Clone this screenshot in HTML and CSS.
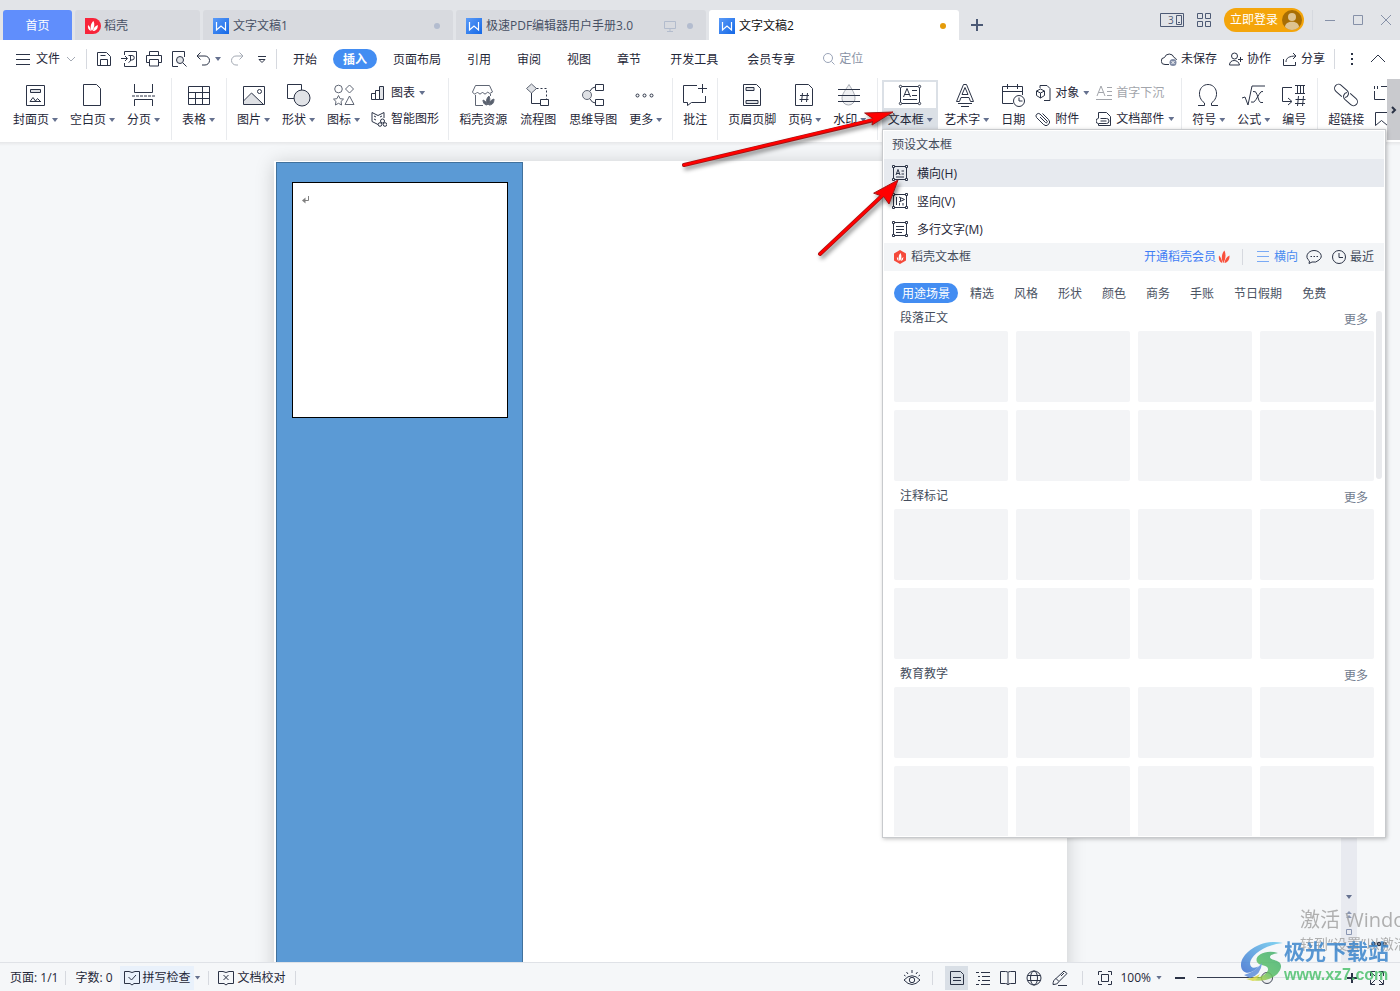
FILE: index.html
```html
<!DOCTYPE html>
<html lang="zh-CN">
<head>
<meta charset="utf-8">
<title>文字文稿2</title>
<link rel="stylesheet" href="styles.css">
</head>
<body>
<svg class="defs" aria-hidden="true">
  <defs>
    <linearGradient id="wg" x1="0" y1="0" x2="1" y2="1"><stop offset="0" stop-color="#5b9bf8"/><stop offset="1" stop-color="#1468e6"/></linearGradient>
    <symbol id="wlogo" viewBox="0 0 16 16"><rect width="16" height="16" fill="url(#wg)"/><path d="M3.500 4v8l4.500-4 4.500 4V4" fill="none" stroke="#fff" stroke-width="1.200"/></symbol>
    <symbol id="flame" viewBox="0 0 12 14"><path d="M5.500 13C2.500 9 4 3 6.500 0.500c1.500 3.500 1.500 8-1 12.500zM4.300 13C1.500 12 .3 9 1 5.500 3 7.500 4 10 4.300 13zM6.500 13c.5-3.500 2-6 5-7.500.3 4-1.500 7-5 7.500z" fill="currentColor"/></symbol>
    <symbol id="frame" viewBox="0 0 24 24"><path d="M4 3.500h16M4 20.500h16M2.500 5v14M21.500 5v14"/><circle cx="2.500" cy="3.500" r="1.200"/><circle cx="21.500" cy="3.500" r="1.200"/><circle cx="2.500" cy="20.500" r="1.200"/><circle cx="21.500" cy="20.500" r="1.200"/></symbol>
    <symbol id="frame16" viewBox="0 0 16 16"><path d="M2 1.500h12M2 14.500h12M1.500 2v12M14.500 2v12"/><path d="M.5.5h2v2h-2zM13.500.5h2v2h-2zM.5 13.500h2v2h-2zM13.500 13.500h2v2h-2z" fill="#fff"/></symbol>
  </defs>
</svg>
<div class="app">
  <header class="titlebar">
    <nav class="tabs">
      <button class="tab home">首页</button>
      <button class="tab daoke"><svg class="i16" viewBox="0 0 16 16"><path d="M0 0h8a8 8 0 010 16H0z" fill="#f8243a"/><path d="M7 13C4.500 9.500 6 5 8.500 3c1.500 3 1 7-1.500 10zM5.800 13C3.500 12 2.500 10 3 7c2 1.500 3 3.500 2.800 6zM8 13c.3-3 2-5 4.800-6 .2 3.500-1.500 6-4.800 6z" fill="#fff"/></svg><span>稻壳</span></button>
      <button class="tab doc"><svg class="i16"><use href="#wlogo"/></svg><span>文字文稿1</span><i class="dot"></i></button>
      <button class="tab doc"><svg class="i16"><use href="#wlogo"/></svg><span>极速PDF编辑器用户手册3.0</span><svg class="i12 pushed" viewBox="0 0 12 12"><path d="M.5 1.500h11v7H.5zM6 8.500v2.500M3 11.500h6" fill="none" stroke="#b3bccd"/></svg><i class="dot near"></i></button>
      <button class="tab doc active"><svg class="i16"><use href="#wlogo"/></svg><span>文字文稿2</span><i class="dot"></i></button>
    </nav>
    <button class="plus" aria-label="新建"><svg class="i12" viewBox="0 0 12 12"><path d="M6 0v12M0 6h12" stroke="#4b5975" stroke-width="2"/></svg></button>
    <div class="wincontrols">
      <button aria-label="窗口"><svg width="24" height="14" viewBox="0 0 24 14" fill="none" stroke="#4d5a75"><path d="M.5.5h23v13H.5z"/><path d="M16.500 2.500h5v9h-5zM18 9.500h2"/><text x="8" y="11" class="svgnum">3</text></svg></button>
      <button aria-label="应用"><svg width="14" height="14" viewBox="0 0 14 14" fill="none" stroke="#4d5a75"><path d="M.5.5h5v5h-5zM8.500.5h5v5h-5zM.5 8.500h5v5h-5zM8.500 8.500h5v5h-5z"/></svg></button>
      <button class="login"><span>立即登录</span><svg width="20" height="20" viewBox="0 0 20 20"><circle cx="10" cy="10" r="10" fill="#a86e04"/><circle cx="10" cy="7" r="4" fill="#dec391"/><path d="M3 17c0-7 14-7 14 0-4 4-10 4-14 0z" fill="#dec391"/></svg></button>
      <i class="vsep"></i>
      <button aria-label="最小化"><svg class="i10" viewBox="0 0 10 10"><path d="M0 5.500h10" stroke="#8691a8"/></svg></button>
      <button aria-label="最大化"><svg class="i10" viewBox="0 0 10 10"><path d="M.5.5h9v9h-9z" fill="none" stroke="#8691a8"/></svg></button>
      <button aria-label="关闭"><svg class="i10" viewBox="0 0 10 10"><path d="M0 0l10 10M10 0L0 10" stroke="#8691a8"/></svg></button>
    </div>
  </header>

  <div class="menubar">
    <button class="file"><svg class="i14" viewBox="0 0 14 14"><path d="M0 2.500h14M0 7.500h14M0 12.500h14"/></svg>文件<svg class="i10 faint" viewBox="0 0 10 10"><path d="M1 3l4 4 4-4"/></svg></button>
    <i class="vsep"></i>
    <div class="quick">
      <button aria-label="保存"><svg class="i16" viewBox="0 0 16 16"><path d="M1.500 1.500h9l4 4v9h-13zM4.500 14.500v-6h7v6M4.500 4.500h5"/></svg></button>
      <button aria-label="输出PDF"><svg class="i16" viewBox="0 0 16 16"><path d="M3.500 4V.5h12v15h-12V12M0 7.500h6M4 5l2.500 2.500L4 10M7.500 4.500h3.500a2 2 0 010 4.500H9.500M9.500 4.500V10l-2 1.500"/></svg></button>
      <button aria-label="打印"><svg class="i16" viewBox="0 0 16 16"><path d="M3.500 4.500v-4h9v4M3.500 11.500H.500v-7h15v7h-3M3.500 8.500h9v6.500h-9z"/></svg></button>
      <button aria-label="打印预览"><svg class="i16" viewBox="0 0 16 16"><path d="M7 15.500H1.500V.5h12V6M12 12l3.500 3.500"/><circle cx="9" cy="9" r="3.500" fill="#e3e5e8"/></svg></button>
      <button aria-label="撤销"><svg class="i14" viewBox="0 0 14 14"><path d="M4.500.5L1 4l3.500 3.500M1 4h8a4.500 4.500 0 010 9H6"/></svg></button>
      <i class="caret"></i>
      <button aria-label="恢复"><svg class="i14 faint" viewBox="0 0 14 14"><path d="M9.500.5L13 4 9.500 7.500M13 4H6a4.500 4.500 0 000 9h2"/></svg></button>
      <button aria-label="更多"><svg class="i10" viewBox="0 0 10 10"><path d="M1 2.500h8M2 5.500h6L5 8.500z"/></svg></button>
    </div>
    <i class="vsep"></i>
    <nav class="menus">
      <button>开始</button><button class="on">插入</button><button>页面布局</button><button class="sp">引用</button><button class="sp">审阅</button><button class="sp">视图</button><button class="sp">章节</button><button class="sp2">开发工具</button><button class="sp2">会员专享</button>
    </nav>
    <label class="search"><svg class="i12" viewBox="0 0 12 12"><circle cx="5" cy="5" r="4.500"/><path d="M8.500 8.500l3 3"/></svg><input type="text" placeholder="定位" aria-label="定位"></label>
    <div class="share">
      <button><svg class="i16" viewBox="0 0 16 16"><path d="M8 13.500H4a3.500 3.500 0 01-.5-7 5 5 0 019.500 0q2 .5 2.500 2.500"/><circle cx="12" cy="11.500" r="3.500" fill="#7f8ba5" stroke="none"/><path d="M10.500 10l3 3M13.500 10l-3 3" stroke="#fff"/></svg>未保存</button>
      <button><svg class="i14" viewBox="0 0 14 14"><circle cx="5.500" cy="4" r="3"/><path d="M.5 13c0-6 9-6 10 0zM9 7.500h5M11.500 5v5"/></svg>协作</button>
      <button><svg class="i14" viewBox="0 0 14 14"><path d="M.5 7v6.500h12V10M3 10c0-4 3-6 10-6M10 1l3 3-3 3"/></svg>分享</button>
      <i class="vsep"></i>
      <button aria-label="更多"><svg width="4" height="14" viewBox="0 0 4 14"><path d="M1 2h2M1 7h2M1 12h2" stroke-width="2"/></svg></button>
      <button class="fold" aria-label="收起"><svg class="i14" viewBox="0 0 14 14"><path d="M0 10l7-7 7 7"/></svg></button>
    </div>
  </div>

  <div class="ribbon">
    <div class="tools">
      <button class="tool"><svg viewBox="0 0 24 24"><path d="M2.500 2.500h18v20h-18z"/><path d="M6.500 6.500h10v3h-10z" fill="#dfe1e5"/><path d="M6 18.500l3-4 2.500 3.500 2-2.500 3 3M6 18.500h11"/></svg><span>封面页<i class="caret"></i></span></button>
      <button class="tool"><svg viewBox="0 0 24 24"><path d="M2.500 1.500h13l4 4v17h-17z"/></svg><span>空白页<i class="caret"></i></span></button>
      <button class="tool"><svg viewBox="0 0 24 24"><path d="M2.500 1v8.500h18V1M2.500 23v-6.500h18V23"/><path d="M0 13h23" stroke-dasharray="3 1"/></svg><span>分页<i class="caret"></i></span></button>
      <i class="rsep"></i>
      <button class="tool"><svg viewBox="0 0 24 24"><path d="M1.500 3.500h21v18h-21zM1.500 9.500h21M1.500 15.500h21M8.500 9.500v12M15.500 3.500v18"/></svg><span>表格<i class="caret"></i></span></button>
      <i class="rsep"></i>
      <button class="tool"><svg viewBox="0 0 24 24"><path d="M1.500 19l9-9 11 11.500h-20z" fill="#dfe1e5" stroke="none"/><path d="M1.500 3.500h21v18h-21zM1.500 18l8-8 12 11.500"/><circle cx="17.500" cy="8.500" r="2"/></svg><span>图片<i class="caret"></i></span></button>
      <button class="tool"><svg viewBox="0 0 24 24"><path d="M.5 1.500h14v14H.5z"/><circle cx="15" cy="15" r="8" fill="#e1e3e7"/></svg><span>形状<i class="caret"></i></span></button>
      <button class="tool"><svg viewBox="0 0 24 24" class="soft"><circle cx="6.500" cy="6" r="3.800"/><path d="M17.500 2l4 4-4 4-4-4zM17.500 13l4.500 8.500H13zM6.500 12.500l1.600 3.200 3.400.4-2.500 2.400.6 3.500-3.100-1.700-3.100 1.700.6-3.500-2.500-2.400 3.400-.4z"/></svg><span>图标<i class="caret"></i></span></button>
      <div class="stack charts">
        <button><svg viewBox="0 0 16 16"><path d="M.5 8.500h4v6h-4zM4.500 5.500h4v9h-4z"/><path d="M8.500 1.500h4v13h-4z" fill="#e1e3e7"/></svg>图表<i class="caret"></i></button>
        <button><svg viewBox="0 0 16 16"><path d="M7 13.500l-6-3V1.500l6 3 6-3V7M3 5l2 1M3 8l2 1M9 6l2-1"/><circle cx="11.500" cy="10" r="2"/><circle cx="9" cy="13.500" r="1.800"/><circle cx="14" cy="13.500" r="1.800"/></svg>智能图形</button>
      </div>
      <i class="rsep"></i>
      <button class="tool"><svg viewBox="0 0 24 24" class="soft"><path d="M12 22.500H4.500V12M1.500 9l3-6.500h14l3 6.500M1.500 9q2 4 5 0 2.500 4 5 0 2.500 4 5 0 2 3 5 0M19.500 11v2"/><path d="M17 22c-2.500-3-1.500-7 1-9 1.500 3 1 6-1 9zM16 22c-3 0-4-3-4-5 2 1 4 2 4 5zM18 22c0-3 2-5 5-6 0 3-1 6-5 6z" fill="#59616e"/></svg><span>稻壳资源</span></button>
      <button class="tool flow"><svg viewBox="0 0 24 24"><path d="M5.500 1l5 4.500-5 4.500-5-4.500z" fill="#dfe1e5" class="soft"/><path d="M5.500 10v10.500h9M14.500 16.500h8v6h-8z"/><path d="M10.500 5.500h10v11" stroke-dasharray="2 2"/></svg><span>流程图</span></button>
      <button class="tool"><svg viewBox="0 0 24 24"><circle cx="6" cy="12" r="4.500" fill="#dfe1e5" class="soft"/><path d="M14.500 1.500h8v6h-8zM14.500 16.500h8v6h-8zM9 8q2-4 5.500-4M9 16q2 4 5.500 4"/></svg><span>思维导图</span></button>
      <button class="tool"><svg viewBox="0 0 24 24"><circle cx="3.500" cy="12.500" r="1.500"/><circle cx="10.500" cy="12.500" r="1.500"/><circle cx="17.500" cy="12.500" r="1.500"/></svg><span>更多<i class="caret"></i></span></button>
      <i class="rsep tight"></i>
      <button class="tool"><svg viewBox="0 0 24 24"><path d="M14 2.500H.5v17h4v3l4-3h14V13M15 5.500h9M19.500 1v9"/></svg><span>批注</span></button>
      <i class="rsep tight"></i>
      <button class="tool"><svg viewBox="0 0 24 24"><path d="M3.500 1.500h13l4 4v17h-17z"/><path d="M6 4.500h8v3H6zM6 17.500h12v3H6z" fill="#dfe1e5"/></svg><span>页眉页脚</span></button>
      <button class="tool"><svg viewBox="0 0 24 24"><path d="M2.500 1.500h13l4 4v17h-17zM9.500 10l-1 9M14.500 10l-1 9M7 12.500h9M6.500 16.500h9"/></svg><span>页码<i class="caret"></i></span></button>
      <button class="tool"><svg viewBox="0 0 24 24"><path d="M11 1.500c3 5 6 9 6 14a6.500 6.500 0 01-13 0c0-5 4-9 7-14z" fill="#eff0f2" stroke="#a9adb5"/><path d="M0 6.500h22M0 12.500h22M0 18.500h22"/></svg><span>水印<i class="caret"></i></span></button>
      <i class="rsep"></i>
      <button class="tool textbox"><svg viewBox="0 0 24 24"><use href="#frame"/><path d="M5.500 14l3.500-8.500 3.500 8.500M7 11.500h4M14 7.500h5M14 12.500h5M5 16.500h14"/></svg><span>文本框<i class="caret"></i></span></button>
      <button class="tool"><svg viewBox="0 0 24 24"><path d="M1.500 18.500l7-17h3l7 17h-3l-1.500-4h-8l-1.500 4zM7 11.500l3-7 3 7zM3 20.500h14M6 23.500h8"/></svg><span>艺术字<i class="caret"></i></span></button>
      <button class="tool date"><svg viewBox="0 0 24 24"><path d="M12 20.500H1.500v-17h20V12M1.500 8.500h20M6.500 1v5M16.500 1v5"/><circle cx="18" cy="18" r="5.500" fill="#fff"/><path d="M18 14.500V18h3.500"/></svg><span>日期</span></button>
      <div class="stack">
        <button><svg viewBox="0 0 16 16"><path d="M5 3V.5h7l3 3v12H9"/><path d="M5.500 4l4 2v4.500l-4 2.500-4-2.500V6zM1.500 6l4 2 4-2M5.500 8v5"/></svg>对象<i class="caret"></i></button>
        <button><svg viewBox="0 0 16 16"><path d="M5 6l5.500 5.500a1 1 0 001.500-1.500L5 3a2.500 2.500 0 00-3.500 3.500l7 7a3.500 3.500 0 005-5L7.500 2.500"/></svg>附件</button>
      </div>
      <div class="stack parts">
        <button class="off"><svg viewBox="0 0 16 16"><path d="M1 11l4-10 4 10M2.500 7.500h5M11 2.500h5M11 6.500h5M11 10.500h5M0 14.500h16"/></svg>首字下沉</button>
        <button><svg viewBox="0 0 16 16"><path d="M2.500 7V1.500h8l4 4v9h-12V13M4.500 7.500h6a2.500 2.500 0 010 5h-8a2.500 2.500 0 010-5M4.500 10h6"/></svg>文档部件<i class="caret"></i></button>
      </div>
      <i class="rsep"></i>
      <button class="tool"><svg viewBox="0 0 24 24"><path d="M1 22.500h6.500v-2.500C-1 14 2 1.500 11 1.500S23 14 14.500 20v2.500H21"/></svg><span>符号<i class="caret"></i></span></button>
      <button class="tool"><svg viewBox="0 0 24 24"><path d="M0 15l3-1 3 8 4-19h13M11 8.500q3-1 4 3l2 6q1 3 4 2M21 8.500q-2-1-4 3l-3 5q-2 4-5 2.500"/></svg><span>公式<i class="caret"></i></span></button>
      <button class="tool"><svg viewBox="0 0 24 24"><path d="M10 4.500H.5v14h9M6 15l4 3.500L6 22M13 2.500h10M13 10.500h10M15.500 3v7M18.500 3v7M21.500 3v7M16.500 13l-1 10M21.500 13l-1 10M13.500 16.500h10M13 20.500h10"/></svg><span>编号</span></button>
      <i class="rsep"></i>
      <button class="tool"><svg viewBox="0 0 24 24"><g transform="rotate(42 12 12)"><path d="M10 16H2a4 4 0 010-8h8a4 4 0 013 6.500M14 8h8a4 4 0 010 8h-8a4 4 0 01-3-6.500"/></g></svg><span>超链接</span></button>
      <div class="stack last">
        <button aria-label="引用"><svg viewBox="0 0 16 16"><path d="M1.500 6v8.500H12M1.500 1v3M4.500 1v3M8 1.500h6"/></svg></button>
        <button aria-label="书签"><svg viewBox="0 0 16 16"><path d="M2.500 1.500h12v13l-6-5-6 5z"/></svg></button>
      </div>
    </div>
    <button class="scroller" aria-label="更多工具"><svg width="6" height="8" viewBox="0 0 6 8"><path d="M1 1l3 3-3 3" stroke-width="2"/></svg></button>
  </div>

  <main class="workspace">
    <div class="canvas">
      <article class="page"><div class="shape"><div class="frame"><svg width="8" height="8" viewBox="0 0 8 8"><path d="M6.500 0v4.500H2" fill="none" stroke="#808080"/><path d="M3.500 1.500v6L0 4.500z" fill="#808080"/></svg></div></div></article>
    </div>
    <div class="vscroll"><i class="caret"></i><svg width="8" height="8" viewBox="0 0 8 8"><path d="M1 4l3-3 3 3zM1 8l3-3 3 3z" fill="#8a96b2"/></svg><svg width="6" height="6" viewBox="0 0 6 6"><path d="M.5.5h5v5h-5z" fill="none" stroke="#8a96b2"/></svg><svg width="8" height="8" viewBox="0 0 8 8"><path d="M1 0l3 3 3-3zM1 4l3 3 3-3z" fill="#8a96b2"/></svg></div>
    <aside class="side"><svg width="16" height="6" viewBox="0 0 16 6" fill="none" stroke="#2c3446" stroke-width="1.500"><circle cx="2.500" cy="3" r="1.500"/><circle cx="8" cy="3" r="1.500"/><circle cx="13.500" cy="3" r="1.500"/></svg></aside>
  </main>

  <footer class="status">
    <button>页面: 1/1</button><i class="vsep"></i><button>字数: 0</button>
    <button class="spell"><svg class="i16" viewBox="0 0 16 16"><path d="M5 1.500H.500v12H6l2 1.500 2-1.500h5.500v-12H11l-3 1-3-1M4.500 7l3 3 4.500-5"/></svg>拼写检查</button><i class="caret"></i><i class="vsep"></i>
    <button class="proof"><svg class="i16" viewBox="0 0 16 16"><path d="M5 1.500H.500v12H6l2 1.500 2-1.500h5.500v-12H11l-3 1-3-1M5.500 5l5 5M10.500 5l-5 5"/></svg>文档校对</button><i class="vsep"></i>
    <div class="views">
      <button aria-label="护眼模式"><svg class="i16" viewBox="0 0 16 16"><path d="M0 10q8-8.500 16 0-8 9-16 0zM8 0v3M2.500 2l1.500 2M13.500 2L12 4M0 5l1.500 1M16 5l-1.500 1"/><circle cx="8" cy="10" r="2.700"/></svg></button>
      <i class="vsep"></i>
      <button class="cur" aria-label="页面视图"><svg class="i14" viewBox="0 0 14 14"><path d="M.5.500h10l3 3v10H.500zM3 6.500h8M3 9.500h8"/></svg></button>
      <button aria-label="大纲"><svg class="i14" viewBox="0 0 14 14"><path d="M0 1.500h3M5 1.500h9M2 5.500h2M6 5.500h8M2 9.500h2M6 9.500h8M0 13.500h3M5 13.500h9"/></svg></button>
      <button aria-label="阅读版式"><svg class="i16" viewBox="0 0 16 16"><path d="M.5 1.500h5q2 0 2.500 1 .5-1 2.500-1h5v12h-5q-2 0-2.500 1.500-.5-1.500-2.500-1.500h-5zM8 2.500V14"/></svg></button>
      <button aria-label="Web版式"><svg class="i16" viewBox="0 0 16 16"><circle cx="8" cy="8" r="7"/><ellipse cx="8" cy="8" rx="3.500" ry="7"/><path d="M1.500 5.500h13M1.500 10.500h13"/></svg></button>
      <button aria-label="写作模式"><svg class="i16" viewBox="0 0 16 16"><path d="M1 14.500c0-3 1-5 3-6l8-7.500 3 2.500-8 8c-1 2-3 3-6 3zM4 8.500l3 3M6 15.500h9M9 6l3-3"/></svg></button>
      <i class="vsep wide"></i>
      <button class="fit" aria-label="适合页面"><svg class="i14" viewBox="0 0 14 14"><path d="M.5 4V.500H4M10 .500h3.500V4M13.500 10v3.500H10M4 13.500H.500V10M3.500 3.500h7v7h-7z"/></svg></button>
      <button class="zoom">100%<i class="caret"></i></button>
      <button class="minus" aria-label="缩小"><svg class="i10" viewBox="0 0 10 10"><path d="M0 5h10" stroke-width="2"/></svg></button>
      <input type="range" min="0" max="100" value="50" aria-label="缩放">
      <button aria-label="放大"><svg class="i10" viewBox="0 0 10 10"><path d="M0 5h10M5 0v10" stroke-width="2"/></svg></button>
      <button class="full" aria-label="全屏"><svg class="i14" viewBox="0 0 14 14"><path d="M.5 5V.500H5M9 .500h4.500V5M13.500 9v4.500H9M5 13.500H.500V9M1 1l4 4M13 1L9 5M13 13L9 9M1 13l4-4"/></svg></button>
    </div>
  </footer>

  <section class="dropdown">
    <h2>预设文本框</h2>
    <button class="opt hover"><svg class="i16" viewBox="0 0 16 16"><use href="#frame16"/><path d="M4 10l2-5.500L8 10M4.500 8.500h3M9.500 6h2.500M9.500 9h2.500M4 12h8"/></svg><span>横向(H)</span></button>
    <button class="opt"><svg class="i16" viewBox="0 0 16 16"><use href="#frame16"/><path d="M4.500 4v8M7 4l5.500 2.500L7 9M8.500 5v3M7.500 10v2.500M11 10v2.500"/></svg><span>竖向(V)</span></button>
    <button class="opt"><svg class="i16" viewBox="0 0 16 16"><use href="#frame16"/><path d="M4 5.500h8M4 8.500h8M4 11.500h6"/></svg><span>多行文字(M)</span></button>
    <div class="bar">
      <svg width="14" height="14" viewBox="0 0 14 14"><path d="M7 0l6 3.500v7L7 14l-6-3.500v-7z" fill="#f5493a"/><path d="M7 11C4.500 8 6 4.500 7.500 3 9 6 8.500 9 7 11zM5.500 11Q3.500 9.500 4 7q2 1.500 1.500 4zM8 11q0-3 2.500-4 0 3-2.500 4z" fill="#fff"/></svg>
      <span class="name">稻壳文本框</span>
      <a href="#vip">开通稻壳会员<svg class="red" width="12" height="14"><use href="#flame"/></svg></a>
      <i class="vsep"></i>
      <button class="blue"><svg class="i12" viewBox="0 0 12 12"><path d="M0 .5h12M0 5.500h12M0 10.500h12"/></svg>横向</button>
      <button aria-label="反馈"><svg class="i16" viewBox="0 0 16 16"><path d="M3 14.500l.5-2.500C-2 8 2 1.500 8 1.500s10 6 5 9.500q-3 3-7 2zM4.500 7.500h1.500M7.500 7.500h1.500M10.500 7.500H12"/></svg></button>
      <button><svg class="i14" viewBox="0 0 14 14"><circle cx="7" cy="7" r="6.500"/><path d="M7 3v4.500h4"/></svg>最近</button>
    </div>
    <nav class="cats"><button class="on">用途场景</button><button>精选</button><button>风格</button><button>形状</button><button>颜色</button><button>商务</button><button>手账</button><button>节日假期</button><button>免费</button></nav>
    <div class="gallery">
      <div class="list">
        <div class="head"><h3>段落正文</h3><a href="#more1">更多</a></div>
        <div class="cards"><i></i><i></i><i></i><i></i><i></i><i></i><i></i><i></i></div>
        <div class="head"><h3>注释标记</h3><a href="#more2">更多</a></div>
        <div class="cards"><i></i><i></i><i></i><i></i><i></i><i></i><i></i><i></i></div>
        <div class="head"><h3>教育教学</h3><a href="#more3">更多</a></div>
        <div class="cards"><i></i><i></i><i></i><i></i><i></i><i></i><i></i><i></i></div>
      </div>
      <div class="thumb"></div>
    </div>
  </section>

  <svg class="arrows" width="240" height="170" viewBox="0 0 240 170" aria-hidden="true">
    <g stroke-linecap="round"><path d="M14 55L204 10M150 144L214 84" stroke="#a01515" stroke-width="4"/><path d="M195 3l28-1-21 13 1-6zM204 83l24-13-9 24-5-7z" fill="#f00" stroke="#a01515"/><path d="M14 55L206 9M150 144L216 82" stroke="#f00" stroke-width="2.500"/></g>
  </svg>

  <div class="activate"><p class="big">激活 Windows</p><p>转到“设置”以激活 Windows。</p></div>
  <div class="brand">
    <svg width="46" height="44" viewBox="0 0 46 44"><defs><linearGradient id="b1" x1="0" y1="1" x2="1" y2="0"><stop offset="0" stop-color="#3d6fd0"/><stop offset="1" stop-color="#6fd0f0"/></linearGradient><linearGradient id="b2" x1="0" y1="1" x2="1" y2="0"><stop offset="0" stop-color="#e5de38"/><stop offset=".5" stop-color="#55bd68"/><stop offset="1" stop-color="#44ae70"/></linearGradient></defs><path d="M45 2C24-3 2 12 3 25c1 9 11 9 18 0-5 3-9 2-9-3C13 14 26 4 45 2z" fill="url(#b1)"/><path d="M40 12c-13-4-24 3-21 9 3 5 12 2 11 8-2 6-10 8-20 9 14 5 31-1 33-12 1-8-11-6-11-10 0-2 3-3 8-4z" fill="url(#b2)"/><path d="M6 34q11-3 18-12-1 12-12 15z" fill="#5f8fdb"/><path d="M8 38q8-1 14-5-3 6-7 7z" fill="#dad94b"/></svg>
    <div><p class="cn">极光下载站</p><p class="url">www.xz7.com</p></div>
  </div>
</div>
</body>
</html>
```
FILE: styles.css
```css
* { box-sizing: border-box; }
body { margin: 0; font: 12px/16px "Open Sans", "Noto Sans CJK SC", sans-serif; color: #1f2738; }
button, input { font: inherit; color: inherit; background: none; border: 0; padding: 0; margin: 0; }
button { display: flex; align-items: center; white-space: nowrap; flex-shrink: 0; }
p, h2, h3 { margin: 0; font: inherit; }
a { color: inherit; text-decoration: none; }
svg { flex-shrink: 0; display: block; }
.defs { position: absolute; width: 0; height: 0; }
.i10 { width: 10px; height: 10px; }
.i12 { width: 12px; height: 12px; }
.i14 { width: 14px; height: 14px; }
.i16 { width: 16px; height: 16px; }
.caret { flex-shrink: 0; width: 6px; height: 4px; background: #65718f; clip-path: polygon(0 0, 100% 0, 50% 100%); }
.vsep { flex-shrink: 0; width: 1px; height: 20px; background: #d6d9df; }
.app { position: relative; display: flex; flex-direction: column; height: 100vh; overflow: hidden; background: #fff; }

.titlebar { display: flex; align-items: flex-end; height: 40px; flex-shrink: 0; background: #e2e4e8; padding-left: 3px; }
.tabs { display: flex; gap: 3px; }
.tab { height: 30px; background: #d8dadf; border-radius: 3px 3px 0 0; color: #475064; gap: 4px; padding: 2px 13px 0 10px; }
.home { width: 69px; background: #608efc; color: #fff; justify-content: center; padding: 2px 0 0; }
.daoke { width: 125px; gap: 3px; }
.doc { width: 250px; }
.active { background: #fff; color: #111; }
.dot { width: 6px; height: 6px; border-radius: 50%; background: #b3bccf; margin-left: auto; }
.pushed { margin-left: auto; }
.dot.near { margin-left: 7px; }
.active .dot { background: #e49b09; }
.plus { width: 36px; height: 30px; justify-content: center; }
.wincontrols { display: flex; align-items: center; height: 40px; margin-left: auto; padding-right: 9px; gap: 13px; }
.wincontrols .vsep { margin-left: -5px; margin-right: -1px; }
.wincontrols .vsep ~ button + button { margin-left: 5px; }
.svgnum { font-size: 10px; fill: #4d5a75; stroke: none; }
.login { height: 24px; background: #f4a50b; border-radius: 12px; color: #fff; padding: 0 2px 0 6px; gap: 4px; }

.menubar { display: flex; align-items: center; height: 38px; flex-shrink: 0; padding: 0 15px 0 16px; }
.menubar svg, .ribbon svg, .status svg, .dropdown .opt svg, .dropdown .bar button svg { fill: none; stroke: #2b3346; }
.file { gap: 6px; margin-right: 10px; }
.menubar svg.faint { stroke: #a4aab4; }
.quick { display: flex; align-items: center; gap: 9px; margin: 0 9px; }
.quick .caret { margin-left: -4px; }
.quick button:last-child { margin-left: 4px; }
.menus { display: flex; margin-left: 8px; }
.menus button { height: 20px; padding: 2px 8px 0; }
.menus .on { background: #438df2; color: #fff; font-weight: 700; border-radius: 10px; padding: 2px 10px 0; margin: 0 8px; }
.menus .sp { margin-left: 10px; }
.menus .sp2 { margin-left: 13px; }
.search { display: flex; align-items: center; gap: 4px; margin-left: 20px; }
.search svg { stroke: #9aa4b8; }
.search input { width: 60px; outline: 0; }
.search input::placeholder { color: #8a93a6; opacity: 1; }
.share { display: flex; align-items: center; gap: 12px; margin-left: auto; }
.share button { gap: 4px; }
.share .vsep { margin-left: -3px; margin-right: 3px; }
.share .fold { margin-left: 5px; }

.ribbon { display: flex; height: 64px; flex-shrink: 0; padding-bottom: 2px; }
.tools { display: flex; flex: 1; min-width: 0; overflow: hidden; padding-left: 7px; }
.tool { flex-direction: column; padding: 5px 6px 0; gap: 5px; height: 52px; }
.tool svg { width: 24px; height: 24px; }
.tool span { display: flex; align-items: center; }
.tool .caret, .stack .caret { margin: 0 0 0 3px; }
.ribbon .soft { stroke: #5f6674; }
.flow { min-width: 50px; }
.rsep { flex-shrink: 0; width: 1px; background: #e9ebee; margin: 0 4px 0 5px; }
.rsep.tight { margin: 0 4px; }
.textbox { width: 56px; height: 50px; margin-top: 2px; padding: 1px 0 0; border: 2px solid #dbe0e6; border-bottom: 0; background: linear-gradient(#fff 26px, #dbe0e6 26px); }
.date { padding-right: 4px; }
.stack { display: flex; flex-direction: column; flex-shrink: 0; gap: 10px; padding: 7px 4px 0 6px; }
.charts { padding-left: 5px; }
.stack button { gap: 4px; height: 16px; }
.stack .caret { margin-left: 0; }
.stack svg { width: 16px; height: 16px; }
.parts { padding: 7px 2px 0 3px; }
.stack .off { color: #a2a5ab; }
.ribbon .off svg { stroke: #a2a5ab; }
.last { padding-left: 3px; }
.scroller { width: 13px; background: #c9cace; justify-content: center; margin-top: 1px; }

.workspace { display: flex; flex: 1; min-height: 0; background: linear-gradient(#e6e7e9, #f5f7f9 4px); }
.canvas { flex: 1; overflow: hidden; padding-top: 19px; }
.page { width: 793px; height: 1122px; margin: 0 auto; padding: 1px 2px; background: #fff; box-shadow: 0 2px 18px #0000002e; }
.shape { width: 247px; height: 1110px; background: #5b9ad5; border: 1px solid #41719c; padding: 19px 14px 0 15px; }
.frame { height: 236px; border: 1px solid #000; background: #fff; padding: 13px 9px; }
.vscroll { width: 16px; background: #e8eaf0; display: flex; flex-direction: column; align-items: center; justify-content: flex-end; gap: 11px; padding-bottom: 8px; }
.side { width: 43px; display: flex; align-items: flex-end; justify-content: center; padding-bottom: 15px; }

.status { display: flex; align-items: center; height: 29px; flex-shrink: 0; background: #f5f7f9; border-top: 1px solid #dfe2e7; padding: 1px 16px 0 10px; }
.status .vsep { height: 14px; margin: 0 9px 0 7px; }
.spell { height: 24px; background: #e9f1fb; gap: 3px; padding: 0 3px 0 4px; margin: 0 1px 0 7px; }
.proof { gap: 4px; margin-right: 2px; }
.views { display: flex; align-items: center; margin-left: auto; gap: 10px; }
.status .views .vsep { margin: 0 2px; }
.status .views .wide { margin-left: 4px; }
.cur { width: 23px; height: 24px; background: #d9dfe6; justify-content: center; margin-right: -2px; }
.fit { margin-left: 3px; }
.zoom { gap: 5px; margin: 0 2px 0 -2px; }
.minus { margin: 0 2px 0 1px; }
.full { margin-left: 3px; }
.views input { appearance: none; width: 140px; height: 12px; background: linear-gradient(90deg, #353d50 50%, #dcdfe5 50%) center / 100% 1px no-repeat; }
.views input::-webkit-slider-thumb { appearance: none; width: 12px; height: 12px; border: 1px solid #444b5a; border-radius: 50%; background: #eceef0; }

.dropdown { position: absolute; left: 882px; top: 129px; width: 504px; height: 709px; display: flex; flex-direction: column; background: #fff; border: 1px solid #c8cacd; padding: 1px; box-shadow: 1px 1px 4px #00000040; }
.dropdown h2 { height: 28px; padding: 6px 8px; background: #f3f5f7; color: #444c5c; flex-shrink: 0; }
.opt { height: 28px; padding: 0 8px; gap: 9px; }
.opt span { padding-top: 2px; }
.hover { background: #e7eaef; }
.bar { display: flex; align-items: center; height: 28px; flex-shrink: 0; background: #f3f5f7; padding: 0 10px 0 9px; color: #444c5c; }
.name { margin: 0 auto 0 4px; }
.bar a { display: flex; gap: 2px; color: #3f7df5; }
.red { color: #f9503c; margin-top: 1px; }
.bar .vsep { height: 16px; margin: 0 14px 0 12px; }
.bar button { gap: 5px; margin-right: 8px; }
.bar button:last-child { gap: 4px; margin: 0 0 0 2px; }
.bar .blue { color: #4a8cf0; }
.dropdown .bar .blue svg { stroke: #7aaaf5; }
.cats { display: flex; gap: 4px; padding: 12px 10px 0; flex-shrink: 0; color: #4b5363; }
.cats button { height: 20px; padding: 1px 8px 0; }
.cats .on { background: #438df2; color: #fff; border-radius: 10px; }
.gallery { display: flex; flex: 1; min-height: 0; overflow: hidden; padding: 0 2px 0 10px; gap: 2px; }
.list { flex: 1; }
.head { display: flex; justify-content: space-between; align-items: center; height: 28px; padding: 2px 6px 0; color: #444c5c; }
.head a { padding-top: 4px; color: #717b8e; }
.cards { display: grid; grid-template-columns: repeat(4, 1fr); grid-auto-rows: 71px; gap: 8px; }
.cards i { background: #f3f4f6; border-radius: 2px; }
.thumb { width: 6px; height: 168px; margin-top: 8px; background: #e9eaed; border-radius: 3px; }

.arrows { position: absolute; left: 670px; top: 110px; pointer-events: none; filter: drop-shadow(2px 3px 2px #00000070); }
.activate { position: absolute; left: 1300px; right: 0; bottom: 37px; overflow: hidden; white-space: nowrap; color: #a3a3a3; font-size: 14px; line-height: 20px; opacity: .85; }
.big { font-size: 20px; line-height: 28px; }
.brand { position: absolute; right: 11px; bottom: 4px; display: flex; align-items: center; white-space: nowrap; opacity: .85; pointer-events: none; }
.brand .cn { font-size: 21px; line-height: 24px; font-weight: 700; color: #3c86cc; }
.brand .url { font: bold 16px/24px "Liberation Sans", sans-serif; color: #4fc16f; }
```
